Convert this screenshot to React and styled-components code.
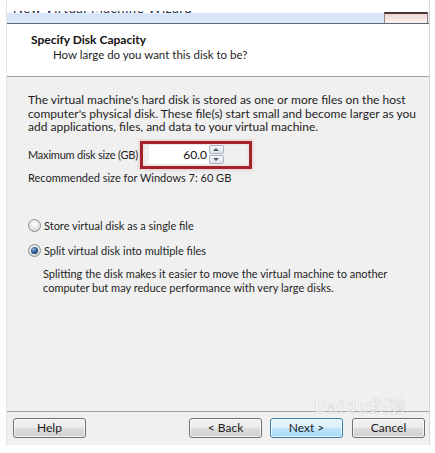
import React from "react";
import styled, { createGlobalStyle } from "styled-components";

const GlobalStyle = createGlobalStyle`
  html, body {
    margin: 0;
    padding: 0;
    background: #ffffff;
  }
  * {
    box-sizing: border-box;
  }
`;

const Page = styled.div`
  width: 435px;
  height: 453px;
  padding: 0 5px 8px 6px;
  font-family: Lato, "Noto Sans", sans-serif;
  font-size: 11px;
  color: #1e1e1e;
  overflow: hidden;
  position: relative;
`;

const Window = styled.div`
  height: 100%;
  display: flex;
  flex-direction: column;
  border-left: 1px solid #e4e4e4;
  border-right: 1px solid #d6d6d6;
`;

const TitleStrip = styled.div`
  height: 24px;
  flex: none;
  display: flex;
  align-items: flex-start;
  justify-content: space-between;
  overflow: hidden;
  background: linear-gradient(#ffffff 0px, #ffffff 12px, #d3e5f8 14px, #dde9f6 23px);
  border-bottom: 1px solid #5b6877;
`;

const TitleText = styled.div`
  margin: 11px 0 0 6px;
  height: 3px;
  overflow: hidden;
  font-size: 13px;
  letter-spacing: 0.6px;
  color: #2a2a3a;
  line-height: 14px;
`;

const TitleInner = styled.div`
  margin-top: -10px;
`;

const CloseTop = styled.div`
  width: 44px;
  height: 12px;
  margin-top: 12px;
  margin-right: 1px;
  border-top: 2px solid #4a3434;
  border-left: 1px solid #9a8080;
  border-right: 1px solid #9a8080;
  background: linear-gradient(#eed8d4, #fbf4f3);
`;

const Header = styled.div`
  height: 53px;
  flex: none;
  background: #ffffff;
  padding: 8px 0 0 24px;
  border-bottom: 1px solid #a0a0a0;
`;

const Heading = styled.div`
  font-weight: 700;
  font-size: 12px;
  line-height: 15px;
  color: #111111;
`;

const SubHeading = styled.div`
  padding-left: 22px;
  font-size: 11.5px;
  line-height: 15px;
`;

const Body = styled.div`
  flex: 1;
  background: #f0f0f0;
  padding: 16px 0 0 21px;
  display: flex;
  flex-direction: column;
`;

const Paragraph = styled.p`
  margin: 0;
  line-height: 13.5px;
  white-space: nowrap;
  font-size: ${(p) => p.$size || 11}px;
  padding-left: ${(p) => p.$indent || 0}px;
  margin-top: ${(p) => p.$top || 0}px;
`;

const SizeRow = styled.div`
  display: flex;
  align-items: center;
  margin-top: 7px;
  gap: 2px;
`;

const FieldLabel = styled.span`
  letter-spacing: -0.2px;
`;

const Highlight = styled.div`
  width: 112px;
  height: 28px;
  border: 3px solid #a3222b;
  box-shadow: 0 0 3px 1px rgba(230, 150, 150, 0.45), inset 0 0 3px rgba(230, 150, 150, 0.4);
  display: flex;
  align-items: center;
  padding-left: 6px;
`;

const NumberField = styled.div`
  width: 60px;
  height: 19px;
  background: #ffffff;
  text-align: right;
  padding-right: 2px;
  line-height: 19px;
  font-size: 12px;
  color: #111;
`;

const Spinner = styled.div`
  width: 15px;
  height: 19px;
  display: flex;
  flex-direction: column;
  gap: 1px;
`;

const SpinButton = styled.div`
  flex: 1;
  border: 1px solid #a8b4c4;
  border-radius: 2px;
  background: linear-gradient(#f6f8fb, #dfe5ec);
  display: flex;
  align-items: center;
  justify-content: center;
`;

const Arrow = styled.div`
  width: 0;
  height: 0;
  border-left: 3px solid transparent;
  border-right: 3px solid transparent;
  ${(p) => (p.$down ? "border-top: 3px solid #4d5a6a;" : "border-bottom: 3px solid #4d5a6a;")}
`;

const RadioRow = styled.label`
  display: flex;
  align-items: center;
  gap: 3px;
  margin-top: ${(p) => p.$top}px;
  line-height: 15px;
`;

const RadioCircle = styled.span`
  width: 13px;
  height: 13px;
  border-radius: 50%;
  border: 1px solid #8d8d8d;
  background: radial-gradient(circle at 50% 40%, #ffffff 0%, #eaeaea 45%, #c9c9c9 100%);
  display: flex;
  align-items: center;
  justify-content: center;
`;

const RadioDot = styled.span`
  width: 7px;
  height: 7px;
  border-radius: 50%;
  background: radial-gradient(circle at 40% 35%, #8fb8e0 0%, #1d4f86 55%, #0d2c55 100%);
`;

const Footer = styled.div`
  height: 34px;
  flex: none;
  background: #f0f0f0;
  border-top: 1px solid #a0a0a0;
  display: flex;
  align-items: center;
  padding: 0 4px 2px 6px;
`;

const Spacer = styled.div`
  flex: 1;
`;

const Button = styled.div`
  width: 73px;
  height: 20px;
  margin-left: ${(p) => p.$gap || 0}px;
  border: 1px solid ${(p) => (p.$primary ? "#3c7fb1" : "#707070")};
  border-radius: 3px;
  background: ${(p) =>
    p.$primary
      ? "linear-gradient(#eaf6fd 0%, #d9f0fc 50%, #bee6fd 51%, #a7d9f5 100%)"
      : "linear-gradient(#f2f2f2 0%, #ebebeb 50%, #dddddd 51%, #cfcfcf 100%)"};
  box-shadow: inset 0 0 0 1px rgba(255, 255, 255, 0.7);
  display: flex;
  align-items: center;
  justify-content: center;
  line-height: 18px;
  font-size: 12px;
  color: #1a1a1a;
`;

const Watermark = styled.div`
  position: absolute;
  left: 314px;
  top: 392px;
  font-family: "Liberation Sans", "Noto Sans CJK SC", sans-serif;
  font-size: 18px;
  font-weight: 700;
  color: rgba(255, 255, 255, 0.5);
  -webkit-text-stroke: 0.6px rgba(170, 170, 170, 0.4);
  letter-spacing: 1px;
  pointer-events: none;
`;

export default function App() {
  return (
    <>
      <GlobalStyle />
      <Page>
        <Window>
          <TitleStrip>
            <TitleText>
              <TitleInner>New Virtual Machine Wizard</TitleInner>
            </TitleText>
            <CloseTop />
          </TitleStrip>
          <Header>
            <Heading>Specify Disk Capacity</Heading>
            <SubHeading>How large do you want this disk to be?</SubHeading>
          </Header>
          <Body>
            <Paragraph $size={12}>
              The virtual machine's hard disk is stored as one or more files on the host
              <br />
              computer's physical disk. These file(s) start small and become larger as you
              <br />
              add applications, files, and data to your virtual machine.
            </Paragraph>
            <SizeRow>
              <FieldLabel>Maximum disk size (GB)</FieldLabel>
              <Highlight>
                <NumberField>60.0</NumberField>
                <Spinner>
                  <SpinButton>
                    <Arrow />
                  </SpinButton>
                  <SpinButton>
                    <Arrow $down />
                  </SpinButton>
                </Spinner>
              </Highlight>
            </SizeRow>
            <Paragraph $top={2}>Recommended size for Windows 7: 60 GB</Paragraph>
            <RadioRow $top={34}>
              <RadioCircle />
              <span>Store virtual disk as a single file</span>
            </RadioRow>
            <RadioRow $top={10}>
              <RadioCircle>
                <RadioDot />
              </RadioCircle>
              <span>Split virtual disk into multiple files</span>
            </RadioRow>
            <Paragraph $indent={15} $top={9}>
              Splitting the disk makes it easier to move the virtual machine to another
              <br />
              computer but may reduce performance with very large disks.
            </Paragraph>
          </Body>
          <Footer>
            <Button>Help</Button>
            <Spacer />
            <Button>&lt; Back</Button>
            <Button $primary $gap={8}>Next &gt;</Button>
            <Button $gap={9}>Cancel</Button>
          </Footer>
        </Window>
        <Watermark>Baidu经验</Watermark>
      </Page>
    </>
  );
}
